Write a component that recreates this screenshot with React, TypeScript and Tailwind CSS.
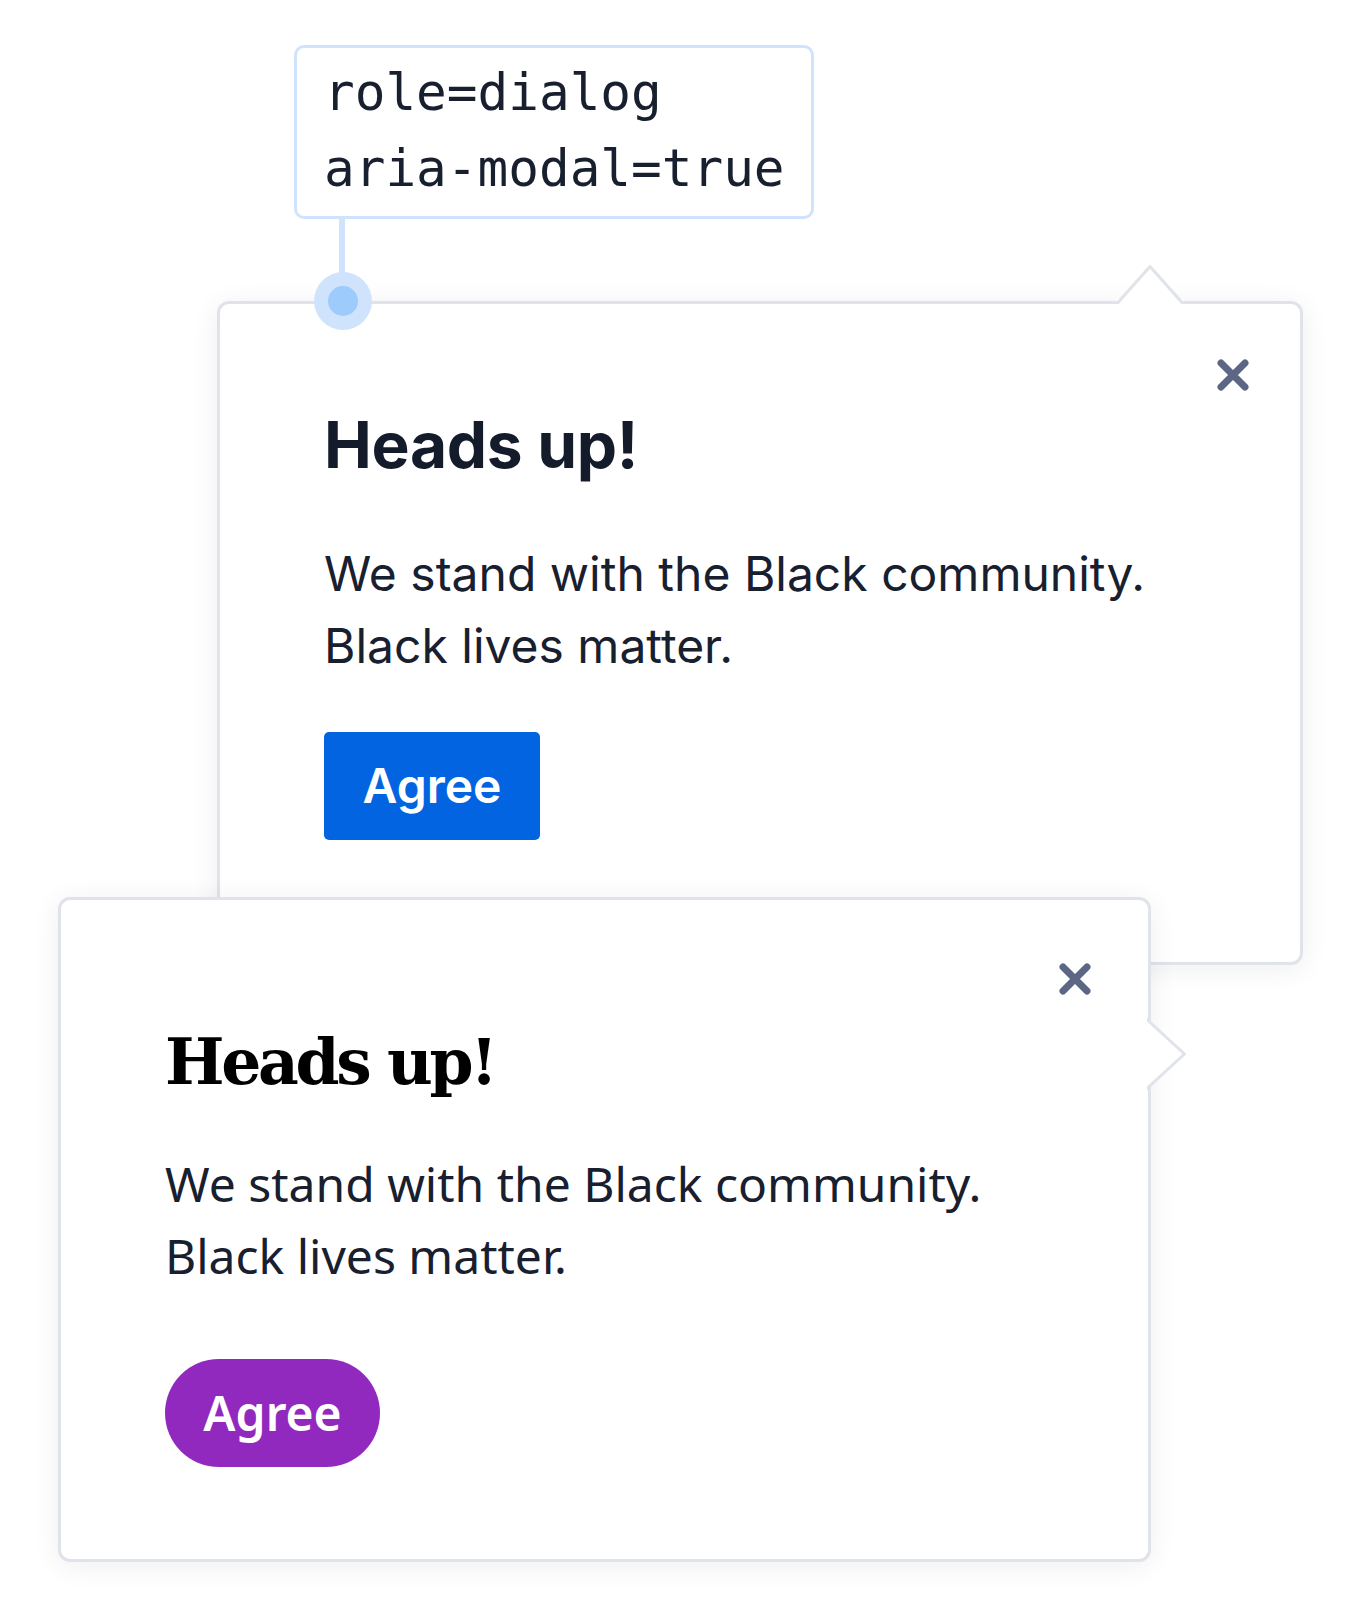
import { ReactNode } from "react";

function CloseIcon() {
  return (
    <svg width="34" height="34" viewBox="0 0 34 34" fill="none">
      <path
        d="M5 5 29 29M29 5 5 29"
        stroke="#5b6785"
        strokeWidth="7"
        strokeLinecap="round"
      />
    </svg>
  );
}

function Dialog({ className, children }: { className: string; children: ReactNode }) {
  return (
    <div
      className={`relative rounded-[12px] border-[3px] border-[#e1e3eb] bg-white shadow-[0_4px_28px_rgba(17,24,39,0.07)] ${className}`}
    >
      {children}
    </div>
  );
}

export default function App() {
  return (
    <div className="relative h-[1624px] w-[1364px] overflow-hidden bg-white pt-[45px]">
      {/* annotation label */}
      <div className="ml-[294px] h-[174px] w-[520px] rounded-[10px] border-[3px] border-[#cfe4fc] bg-white pl-[27px] pt-[7px] font-['DejaVu_Sans_Mono',monospace] text-[51px] leading-[76px] text-[#18202f]">
        <div>role=dialog</div>
        <div>aria-modal=true</div>
      </div>
      <div className="ml-[339px] h-[82px] w-[6px] bg-[#cfe4fc]" />

      {/* dialog 1: Inter */}
      <Dialog className="ml-[217px] h-[664px] w-[1086px] pl-[104px] pt-[102px] font-['Inter',sans-serif]">
        <div className="absolute left-[94px] top-[-32px] flex h-[58px] w-[58px] items-center justify-center rounded-full bg-[#cfe4fc]">
          <div className="h-[30px] w-[30px] rounded-full bg-[#9ccbfc]" />
        </div>
        <svg
          className="absolute left-[894px] top-[-42px]"
          width="72"
          height="48"
          viewBox="0 0 72 48"
          fill="none"
        >
          <rect x="2" y="37" width="68" height="10" fill="#ffffff" />
          <path
            d="M1 40.5 H4 L36 4.5 L68 40.5 H71"
            stroke="#e1e3eb"
            strokeWidth="3"
            strokeLinejoin="round"
            fill="#ffffff"
          />
        </svg>
        <button className="absolute right-[50px] top-[54px]">
          <CloseIcon />
        </button>
        <h2 className="text-[64px] font-bold leading-[77px] tracking-[-0.3px] text-[#141b2b]">
          Heads up!
        </h2>
        <p className="mt-[55px] text-[48px] leading-[72px] text-[#18202f]">
          We stand with the Black community.
          <br />
          Black lives matter.
        </p>
        <button className="mt-[50px] flex h-[108px] w-[216px] items-center justify-center rounded-[5px] bg-[#0364e1] text-[48px] font-semibold text-white">
          Agree
        </button>
      </Dialog>

      {/* dialog 2: serif + Noto Sans */}
      <Dialog className="z-10 ml-[58px] mt-[-68px] h-[665px] w-[1093px] pl-[104px] pt-[124px] font-['Noto_Sans',sans-serif]">
        <svg
          className="absolute left-[1079px] top-[112px]"
          width="52"
          height="84"
          viewBox="0 0 52 84"
          fill="none"
        >
          <rect x="2" y="10" width="10" height="64" fill="#ffffff" />
          <path
            d="M8.5 6 V9 L44.5 42 L8.5 75 V78"
            stroke="#e1e3eb"
            strokeWidth="3"
            strokeLinejoin="round"
            fill="#ffffff"
          />
        </svg>
        <button className="absolute right-[56px] top-[62px]">
          <CloseIcon />
        </button>
        <h2 className="font-['DejaVu_Serif',serif] text-[63px] font-bold leading-[76px] tracking-[-3.3px] text-black">
          Heads up!
        </h2>
        <p className="mt-[48px] text-[48px] leading-[72px] text-[#18202f]">
          We stand with the Black community.
          <br />
          Black lives matter.
        </p>
        <button className="mt-[67px] flex h-[108px] w-[215px] items-center justify-center rounded-full bg-[#9229bf] text-[48px] font-semibold text-white">
          Agree
        </button>
      </Dialog>
    </div>
  );
}
